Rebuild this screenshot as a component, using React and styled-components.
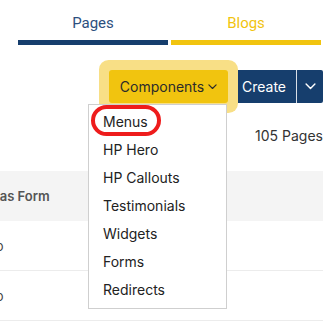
import React from 'react';
import styled, { createGlobalStyle } from 'styled-components';

const GlobalStyle = createGlobalStyle`
  body {
    margin: 0;
    background: #fff;
    font-family: Inter, "Liberation Sans", sans-serif;
    overflow: hidden;
  }
`;

const NAVY = '#163e6d';
const GOLD = '#f1c40f';

const Page = styled.div`
  width: 331px;
  height: 329px;
  overflow: hidden;
`;

const TabBar = styled.div`
  display: grid;
  grid-template-columns: 150px 150px;
  gap: 3px;
  padding-left: 18px;
`;

const Tab = styled.div`
  height: 45px;
  border-bottom: 5px solid ${props => props.color};
  color: ${props => props.text};
  font-family: Roboto, "Liberation Sans", sans-serif;
  font-size: 15px;
  line-height: 18px;
  text-align: center;
  padding-top: 14px;
  box-sizing: border-box;
`;

const Toolbar = styled.div`
  display: flex;
  justify-content: flex-end;
  gap: 4px;
  margin-top: 25px;
  padding-right: 8px;
`;

const MenuAnchor = styled.div`
  position: relative;
`;

const ComponentsButton = styled.button`
  height: 33px;
  width: 119px;
  border: none;
  background: ${GOLD};
  color: #2b2b2b;
  font-family: Inter, "Liberation Sans", sans-serif;
  font-size: 14px;
  display: flex;
  align-items: center;
  justify-content: center;
  gap: 4px;
  padding: 0;
  box-shadow: 0 0 0 10px #f8df86;
  border-radius: 3px;
`;

const SplitButton = styled.div`
  display: flex;
  height: 33px;
  background: ${NAVY};
  border-radius: 2px;
`;

const CreatePart = styled.button`
  width: 65px;
  border: none;
  background: transparent;
  color: #fff;
  font-family: Inter, "Liberation Sans", sans-serif;
  font-size: 14px;
  padding: 0;
  border-right: 1px solid #d9dfe8;
`;

const CaretPart = styled.button`
  width: 26px;
  border: none;
  background: transparent;
  color: #fff;
  display: flex;
  align-items: center;
  justify-content: center;
  padding: 0;
`;

const Menu = styled.ul`
  position: absolute;
  z-index: 2;
  top: 34px;
  left: -21px;
  width: 139px;
  margin: 0;
  padding: 3px 0 4px;
  list-style: none;
  background: #fff;
  border: 1px solid #cfcfcf;
  box-sizing: border-box;
`;

const MenuItem = styled.li`
  position: relative;
  height: 28px;
  line-height: 28px;
  padding-left: 14px;
  font-size: 14px;
  color: #222;
`;

const Marker = styled.span`
  position: absolute;
  left: 2px;
  top: -3px;
  width: 70px;
  height: 31px;
  border: 4px solid #ee1c1c;
  border-radius: 16px;
  box-sizing: border-box;
`;

const Count = styled.div`
  margin-top: 23px;
  padding-right: 8px;
  text-align: right;
  font-size: 14px;
  line-height: 20px;
  color: #333;
`;

const Table = styled.div`
  margin-top: 25px;
  margin-left: -14px;
  width: 337px;
`;

const HeaderRow = styled.div`
  height: 50px;
  background: #f4f4f4;
  display: flex;
  align-items: center;
  font-size: 13px;
  font-weight: 600;
  color: #555;
`;

const Row = styled.div`
  height: 50px;
  border-bottom: 1px solid #ececec;
  box-sizing: border-box;
  display: flex;
  align-items: center;
  font-size: 13px;
  color: #444;
`;

const Cell = styled.span`
  padding-left: ${props => props.indent}px;
`;

function Chevron({ size = 9, color = 'currentColor' }) {
  return (
    <svg width={size} height={size * 0.6} viewBox="0 0 10 6" fill="none">
      <polyline points="1,1 5,5 9,1" stroke={color} strokeWidth="1.3" strokeLinecap="round" strokeLinejoin="round" />
    </svg>
  );
}

const items = ['Menus', 'HP Hero', 'HP Callouts', 'Testimonials', 'Widgets', 'Forms', 'Redirects'];

export default function App() {
  return (
    <Page>
      <GlobalStyle />
      <TabBar>
        <Tab color={NAVY} text="#2c4f7e">Pages</Tab>
        <Tab color={GOLD} text={GOLD}>Blogs</Tab>
      </TabBar>

      <Toolbar>
        <MenuAnchor>
          <ComponentsButton>
            Components <Chevron />
          </ComponentsButton>
          <Menu>
            {items.map((item, i) => (
              <MenuItem key={item}>
                {item}
                {i === 0 && <Marker />}
              </MenuItem>
            ))}
          </Menu>
        </MenuAnchor>
        <SplitButton>
          <CreatePart>Create</CreatePart>
          <CaretPart><Chevron size={11} /></CaretPart>
        </SplitButton>
      </Toolbar>

      <Count>105 Pages</Count>

      <Table>
        <HeaderRow><Cell indent={4}>Has Form</Cell></HeaderRow>
        <Row><Cell indent={0}>No</Cell></Row>
        <Row><Cell indent={0}>No</Cell></Row>
      </Table>
    </Page>
  );
}
